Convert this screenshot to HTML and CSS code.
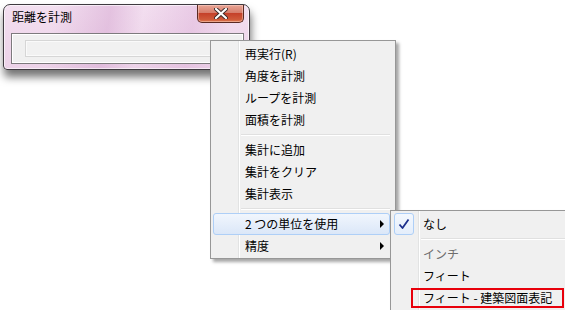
FILE: index.html
```html
<!DOCTYPE html>
<html lang="ja">
<head>
<meta charset="utf-8">
<title>距離を計測</title>
<link rel="stylesheet" href="styles.css">
</head>
<body>
<div class="desktop">
  <div class="window">
    <div class="titlebar">
      <span class="title">距離を計測</span>
      <div class="close">
        <svg width="14" height="11" viewBox="0 0 14 11"><path d="M2 1 L12 10 M12 1 L2 10" stroke="#3b2a2a" stroke-width="4" stroke-linecap="round"/><path d="M2 1 L12 10 M12 1 L2 10" stroke="#fff" stroke-width="2.2" stroke-linecap="round"/></svg>
      </div>
    </div>
    <div class="client"><div class="field"></div></div>
  </div>

  <div class="menu main-menu">
    <div class="item">再実行(R)</div>
    <div class="item">角度を計測</div>
    <div class="item">ループを計測</div>
    <div class="item">面積を計測</div>
    <div class="sep"></div>
    <div class="item">集計に追加</div>
    <div class="item">集計をクリア</div>
    <div class="item">集計表示</div>
    <div class="sep"></div>
    <div class="item active">2&nbsp;つの単位を使用<span class="arrow"></span></div>
    <div class="item">精度<span class="arrow"></span></div>
  </div>

  <div class="menu sub-menu">
    <div class="item checked"><span class="check"><svg width="12" height="12" viewBox="0 0 12 12"><path d="M1.5 6.5 L4.5 10 L10.5 1.5" fill="none" stroke="#1c2f8c" stroke-width="1.8" stroke-linejoin="round"/></svg></span>なし</div>
    <div class="sep"></div>
    <div class="item disabled">インチ</div>
    <div class="item">フィート</div>
    <div class="item">フィート - 建築図面表記</div>
    <div class="annot"></div>
  </div>
</div>
</body>
</html>
```
FILE: styles.css
```css
html, body {
  margin: 0;
  padding: 0;
  background: #fff;
}
body {
  font-family: "Noto Sans CJK JP", "Noto Sans", sans-serif;
  font-size: 12px;
  color: #000;
}
.desktop {
  position: relative;
  width: 565px;
  height: 310px;
  overflow: hidden;
  background: #fff;
}

/* dialog window */
.window {
  position: absolute;
  left: 3px;
  top: 4px;
  width: 247px;
  height: 66px;
  box-sizing: border-box;
  border: 1px solid #3f3a40;
  border-radius: 7px 7px 4px 4px;
  background:
    linear-gradient(100deg, rgba(255,255,255,0) 20%, rgba(210,160,205,0.45) 42%, rgba(255,255,255,0) 55%, rgba(215,165,210,0.35) 75%, rgba(255,255,255,0) 90%),
    linear-gradient(#f3dff0, #ecd2e8);
  box-shadow: 1px 7px 9px rgba(0,0,0,0.55), inset 0 0 0 1px rgba(255,255,255,0.6);
  padding: 0 5px 5px 7px;
  display: flex;
  flex-direction: column;
}
.titlebar {
  height: 28px;
  display: flex;
  justify-content: space-between;
  align-items: flex-start;
  flex: none;
}
.title {
  padding-top: 4px;
  line-height: 16px;
  margin-left: 1px;
  color: #000;
}
.close {
  width: 47px;
  height: 18px;
  box-sizing: border-box;
  border: 1px solid #5a2a22;
  border-top: none;
  border-radius: 0 0 5px 5px;
  background: linear-gradient(#e9a596 0%, #d67e6c 45%, #c5412a 50%, #cf5a3a 85%, #e07e52 100%);
  box-shadow: inset 0 0 0 1px rgba(255,220,210,0.45);
  display: flex;
  align-items: center;
  justify-content: center;
}
.client {
  flex: 1;
  border: 1px solid #7d7a7d;
  background: #f0f0f0;
  box-shadow: inset 0 0 0 1px #fff;
}
.field {
  margin: 6px 0 0 13px;
  width: 220px;
  height: 17px;
  box-sizing: border-box;
  border: 1px solid #d6d6d6;
  background: #f1f1f1;
  box-shadow: inset 0 0 0 1px #fafafa;
}

/* popup menus */
.menu {
  position: absolute;
  box-sizing: border-box;
  border: 1px solid #979797;
  background-color: #f0f0f0;
  background-image: linear-gradient(to right, transparent 27px, #e2e3e3 27px, #e2e3e3 28px, #fff 28px, #fff 29px, transparent 29px);
  box-shadow: 3px 3px 3px rgba(0,0,0,0.35);
  padding: 2px 5px 1px 2px;
}
.main-menu {
  left: 210px;
  top: 40px;
  width: 186px;
}
.sub-menu {
  left: 390px;
  top: 210px;
  width: 200px;
  height: 120px;
}
.item {
  height: 22px;
  line-height: 20px;
  box-sizing: border-box;
  border: 1px solid transparent;
  border-radius: 3px;
  padding-left: 31px;
  padding-bottom: 1px;
  display: flex;
  align-items: center;
  white-space: nowrap;
}
.item.active {
  border-color: #aecff7;
  background: linear-gradient(#f1f6fd, #dbe7f8);
}
.arrow {
  margin-left: auto;
  margin-right: 5px;
  width: 0;
  height: 0;
  border-left: 4px solid #000;
  border-top: 4px solid transparent;
  border-bottom: 4px solid transparent;
}
.sep {
  margin: 3px 0 3px 28px;
  border-top: 1px solid #e0e0e0;
  border-bottom: 1px solid #fff;
  height: 0;
}
.sub-menu .item {
  padding-left: 29px;
  position: relative;
}
.check {
  position: absolute;
  left: 0;
  top: -1px;
  width: 20px;
  height: 22px;
  box-sizing: border-box;
  border: 1px solid #aecff7;
  border-radius: 3px;
  background: linear-gradient(#f3f8fe, #e4eefb);
  display: flex;
  align-items: center;
  justify-content: center;
}
.item.disabled {
  color: #6d6d6d;
}
.annot {
  position: absolute;
  left: 20px;
  top: 77px;
  width: 153px;
  height: 20px;
  box-sizing: border-box;
  border: 2px solid #e8000b;
}
```
